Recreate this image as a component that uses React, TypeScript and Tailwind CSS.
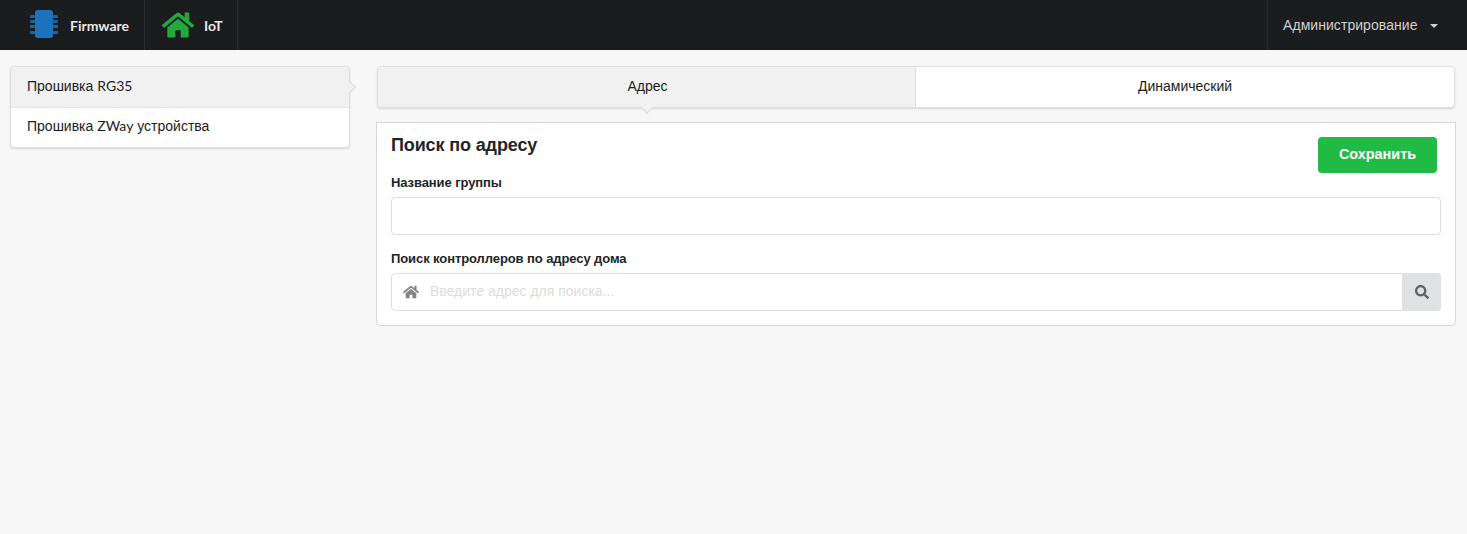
import { FaHome, FaSearch } from 'react-icons/fa'

function ChipIcon() {
  const rows = [5, 10, 15, 21]
  return (
    <svg width="30" height="30" viewBox="0 0 30 30" className="block">
      {rows.map((y) => (
        <g key={y} fill="#1b65a6">
          <rect x="1" y={y} width="5" height="3" rx="1" />
          <rect x="24" y={y} width="5" height="3" rx="1" />
        </g>
      ))}
      <rect x="6" y="0" width="18" height="28" rx="3" fill="#1e72bd" />
    </svg>
  )
}

export default function App() {
  return (
    <div className="min-h-[534px] bg-[#f7f7f7] font-['Liberation_Sans',Arial,sans-serif] text-[14px] text-[#212529]">
      {/* Navbar */}
      <nav className="flex h-[50px] items-stretch justify-between bg-[#1b1c1d]">
        <div className="flex">
          <div className="flex w-[145px] items-center border-r border-[#2c2d2e] pl-[29px]">
            <ChipIcon />
            <span className="ml-[11px] font-['Lato',sans-serif] text-[14px] font-bold text-[#e8e8e8]">Firmware</span>
          </div>
          <div className="flex w-[93px] items-center border-r border-[#2c2d2e] pl-[17px]">
            <FaHome className="text-[#21a83e]" size={32} />
            <span className="ml-[10px] font-['Lato',sans-serif] text-[14px] font-bold text-[#e8e8e8]">IoT</span>
          </div>
        </div>
        <div className="flex w-[200px] items-center border-l border-[#2c2d2e] pl-[15px] text-[14px] text-[#d0d0d0]">
          <span className="tracking-[0.06px]">Администрирование</span>
          <span className="ml-[12px] mt-[2px] h-0 w-0 border-x-[4px] border-t-[4px] border-x-transparent border-t-[#d0d0d0]" />
        </div>
      </nav>

      <div className="flex items-start gap-[26px] pl-[10px] pr-[11px] pt-[16px]">
        {/* Sidebar */}
        <aside className="w-[340px] shrink-0 rounded-[4px] border border-[#dfdfdf] bg-white shadow-[0_1px_2px_rgba(34,36,38,0.15)]">
          <div className="relative flex h-[41px] items-center rounded-t-[3px] border-b border-[#e4e4e4] bg-[#f1f1f1] pb-[2px] pl-[16px] text-[#1b1c1d]">
            <span>
              Прошивка <span className="font-['Lato',sans-serif]">RG35</span>
            </span>
            <span className="absolute right-[-5px] top-[15px] h-[10px] w-[10px] rotate-45 border-r border-t border-[#dcdcdc] bg-[#f1f1f1]" />
          </div>
          <div className="flex h-[39px] items-center pb-[3px] pl-[16px] text-[#1b1c1d]">
            <span>
              Прошивка <span className="font-['Lato',sans-serif]">ZWay</span> устройства
            </span>
          </div>
        </aside>

        <main className="flex-1">
          {/* Tabs */}
          <div className="mx-[1px] grid h-[42px] grid-cols-2 rounded-[4px] border border-[#dfdfdf] bg-white shadow-[0_1px_2px_rgba(34,36,38,0.15)]">
            <div className="relative flex items-center justify-center rounded-l-[3px] border-r border-[#dedede] bg-[#f1f1f1] pb-[2px] pl-[2px] text-[#1b1c1d]">
              Адрес
              <span className="absolute bottom-[-5px] left-1/2 h-[10px] w-[10px] -translate-x-1/2 rotate-45 border-b border-r border-[#dcdcdc] bg-[#f1f1f1]" />
            </div>
            <div className="flex items-center justify-center rounded-r-[3px] pb-[2px] text-[#1b1c1d]">Динамический</div>
          </div>

          {/* Form panel */}
          <section className="mt-[14px] h-[204px] rounded-b-[4px] border border-[#d4d4d5] bg-white pl-[14px] pr-[14px]">
            <div className="flex items-start justify-between">
              <h2 className="mt-[10px] text-[18px] font-bold leading-[24px] tracking-[-0.13px]">Поиск по адресу</h2>
              <button className="mr-[4px] mt-[14px] h-[36px] w-[119px] rounded-[4px] bg-[#21ba45] text-[14.4px] font-bold text-white">
                Сохранить
              </button>
            </div>
            <label className="mt-[1px] block text-[13px] font-bold leading-[18px] tracking-[-0.09px]">Название группы</label>
            <input className="mt-[5px] block h-[38px] w-full rounded-[4px] border border-[#dedede] bg-white" />
            <label className="mt-[15px] block text-[13px] font-bold leading-[18px] tracking-[-0.09px]">Поиск контроллеров по адресу дома</label>
            <div className="mt-[5px] flex h-[38px] rounded-[4px] border border-[#dedede]">
              <div className="flex w-[38px] items-center justify-center text-[#848484]">
                <FaHome size={16} />
              </div>
              <input
                placeholder="Введите адрес для поиска..."
                className="mb-[2px] min-w-0 flex-1 text-[14px] outline-none placeholder:text-[#dcdcdc]"
              />
              <div className="m-[-1px] flex w-[39px] items-center justify-center rounded-r-[4px] bg-[#e0e1e2] text-[#5f5f5f]">
                <FaSearch size={14} />
              </div>
            </div>
          </section>
        </main>
      </div>
    </div>
  )
}
